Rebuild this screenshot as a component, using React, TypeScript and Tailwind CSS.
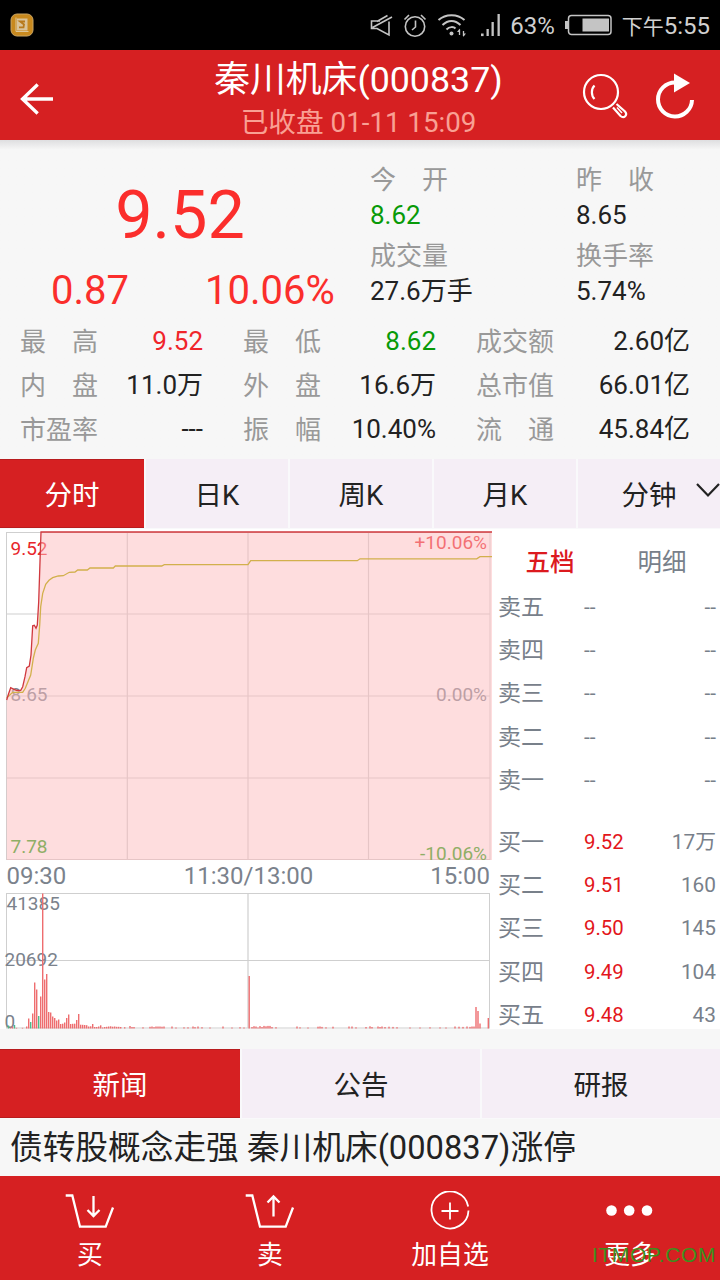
import React from 'react';
import clsx from 'clsx';

const FONT = "font-['Roboto','Noto_Sans_CJK_SC',sans-serif]";

const PERIODS = ['分时', '日K', '周K', '月K', '分钟'];
const NEWS_TABS = ['新闻', '公告', '研报'];

const STATS = [
    { label: '最　高', value: '9.52', color: 'text-[#f0252a]' },
    { label: '最　低', value: '8.62', color: 'text-[#089a08]' },
    { label: '成交额', value: '2.60亿' },
    { label: '内　盘', value: '11.0万' },
    { label: '外　盘', value: '16.6万' },
    { label: '总市值', value: '66.01亿' },
    { label: '市盈率', value: '---' },
    { label: '振　幅', value: '10.40%' },
    { label: '流　通', value: '45.84亿' },
];

const ASKS = ['卖五', '卖四', '卖三', '卖二', '卖一'];
const BIDS = [
    ['买一', '9.52', '17万'],
    ['买二', '9.51', '160'],
    ['买三', '9.50', '145'],
    ['买四', '9.49', '104'],
    ['买五', '9.48', '43'],
];

const PRICE_LINE =
    '6.7,171 8.5,165 10.7,158.7 14,160.3 17,161.5 20.7,161.3 22.7,157.7 25,147.7 26.7,138.7 29.3,137 31,126 32.7,96.7 34.3,96.3 36,99.3 37.3,96 38.7,72.7 40,32.7 41,3 492,3';

const AVG_LINE =
    '6.7,168.7 12.7,163.3 22.7,163.3 25.3,159.3 30.7,146 33.3,129.3 35.3,121 38.3,114.3 39.7,96 40.7,77.7 42.7,64.3 45.7,55.3 49,51.3 52.7,48.7 58.3,47 63.3,46.7 69.3,43.3 75,43 77.7,41 87.3,41 90,39 113.3,39 115.3,37 161.7,37 164.3,35.7 248,35.7 250.7,31.7 357.3,31.7 360,29.8 476.7,29.8 480,27.7 492,27.7';

// [x, height, falling]
const VOLUMES: [number, number, boolean?][] = [
    [8.5, 3, true], [10.5, 1], [12.5, 2], [14.5, 3.5, true], [16.5, 0.7], [22.5, 0.7], [26.7, 2],
    [28.7, 10], [30.7, 6.5, true], [32.7, 15], [34.7, 46], [36.7, 39], [38.7, 12.5, true],
    [40.7, 32], [42.7, 135], [44.7, 49], [46.7, 54.5], [48.7, 16.5], [50.7, 16], [52.7, 12],
    [54.7, 10.5], [56.7, 8], [58.7, 9], [60.7, 4.5], [62.7, 4.8], [64.7, 6], [66.7, 10.5],
    [68.7, 14], [70.7, 4.5], [72.7, 4.7], [74.7, 4.8], [76.7, 8.5], [78.7, 14.5], [80.7, 3.8],
    [82.7, 3.7], [84.7, 3.5], [86.7, 3.3], [88.7, 2], [90.7, 2.2], [92.7, 4.5], [94.7, 1.5],
    [96.7, 1.5], [98.7, 2], [100.7, 3.2], [102.7, 1], [104.7, 1.5], [106.7, 1.7], [108.7, 2],
    [110.7, 2.2], [112.7, 1.8], [114.7, 2], [116.7, 1.7], [118.7, 1.7], [120.7, 1.5],
    [124.7, 1.3], [130, 2.5], [132, 1.5], [134, 1.5], [143, 1.2], [150, 1.7], [152, 2],
    [154, 1.4], [156, 2], [158, 2], [160, 2], [162, 1.8], [164, 2], [172, 2], [176, 1],
    [184, 1.2], [188, 1.2], [193, 2], [195, 1.4], [198, 2], [202, 1.3], [210, 1],
    [223, 2], [232, 1], [240, 1.3], [244, 1], [249.2, 52.5], [252, 1.5], [254, 2.3], [256, 2],
    [258, 1], [260, 2.4], [262, 1.5], [264, 2.6], [266, 2.2], [268, 2.6], [270, 2.6], [272, 1.5],
    [276, 1.3], [297, 2], [300, 1.2], [308, 1], [318, 1.8], [320, 2], [322, 1.6], [326, 1.2],
    [333, 1.8], [349, 2], [352, 2], [356, 1.2], [366, 1.5], [370, 2.2], [372, 1.5], [378, 2],
    [380, 1.5], [382, 2], [385, 1.5], [389, 1.8], [393, 1.6], [397, 1.3], [410, 1], [420, 1],
    [430, 1.2], [440, 1.1], [446, 1], [455, 2], [459, 1.8], [463, 1.6], [467, 2], [470, 1.6],
    [472, 2], [474, 2], [476, 21.5], [478, 17.5], [480, 5], [488.3, 10.5],
];

const StatusBar = () => (
    <div className="flex h-[50px] items-center bg-black pr-[10px] pl-[10px] text-[24px] leading-[52px] text-[#d0d0d0]">
        <svg className="h-6 w-6" viewBox="0 0 24 24">
            <rect x="1" y="1" width="22" height="22" rx="6" fill="#c8891e" stroke="#c9a565" />
            <path d="M6 4.500V18.500H18.500" fill="none" stroke="#dcc69a" strokeWidth="1" />
            <rect x="7" y="5.500" width="10.500" height="12" fill="#d9c39a" />
            <path d="M15 8.500H10L14 11.500L13.500 14.300H9" fill="none" stroke="#b87a1c" strokeWidth="1.800" />
        </svg>
        <div className="flex-1" />

        {/* mute */}
        <svg className="h-6 w-6" viewBox="0 0 24 24" fill="none" stroke="#c4c4c4" strokeWidth="1.600">
            <path d="M11 8H2.500V15.500H8L20 22V8.500M8 8.500L18.500 2.500M3.500 14.500L23 4" />
        </svg>
        {/* alarm */}
        <svg className="ml-[10px] h-6 w-6" viewBox="0 0 24 24" fill="none" stroke="#c4c4c4" strokeWidth="1.600">
            <circle cx="12" cy="13.500" r="9.700" />
            <path d="M12.500 7.500V14L9 17M1.500 6.500L6 2M18 2L22.500 6.500" />
        </svg>
        {/* wifi */}
        <svg className="ml-[10px] h-6 w-[30px]" viewBox="0 0 30 24" fill="none" stroke="#c4c4c4" strokeWidth="2">
            <path d="M1.500 7C8.500 .5 20.500 .5 27.500 7M5.500 12C11 6.500 18 6.500 23.500 12M9.500 16.500C12.500 13.500 16.500 13.500 18.500 15.500" />
            <circle cx="14.500" cy="20.500" r="2" fill="#c4c4c4" stroke="none" />
            <path d="M22.500 16.500V22M26.500 23V18" strokeWidth="1.300" />
            <path d="M20 19L22.800 15.500V19ZM29 20.500L26.200 24V20.500Z" fill="#c4c4c4" stroke="none" />
        </svg>
        {/* signal */}
        <svg className="ml-[14px] h-6 w-5" viewBox="0 0 20 24" fill="#c4c4c4">
            <rect x="0" y="20.500" width="2.600" height="2.600" />
            <rect x="5.500" y="16" width="2.300" height="7" />
            <rect x="10.500" y="9" width="2.300" height="14" />
            <rect x="16.500" y="1" width="2.300" height="22" />
        </svg>
        <span className="ml-[9px] h-[50px]">63%</span>
        <svg className="ml-[10px] h-[22px] w-[48px]" viewBox="0 0 48 22">
            <rect x="3.500" y="1.500" width="42.500" height="19" rx="3" fill="none" stroke="#c4c4c4" strokeWidth="1.500" />
            <rect x="0" y="7" width="3" height="8" fill="#c4c4c4" />
            <rect x="17.500" y="4.500" width="26.500" height="13" fill="#c4c4c4" />
        </svg>
        <span className="ml-[9px] h-[50px] whitespace-nowrap">
            <span className="text-[21px]">下午</span>5:55
        </span>
    </div>
);

const Header = () => (
    <header className="flex h-[90px] items-center justify-between bg-[#d62022] pr-[24px] pl-[19px]">
        <svg className="mt-[8px] h-9 w-[110px]" viewBox="0 0 110 36" fill="none" stroke="#fff" strokeWidth="3.300">
            <path d="M34 18H3M18.700 3.500L3.500 18L18.700 32.500" />
        </svg>
        <div className="-mr-[6px] flex flex-col items-center pt-[12px] whitespace-nowrap">
            <h1 className="h-[44px] text-[35.800px] leading-[44px] text-white">秦川机床(000837)</h1>
            <p className="h-[42px] text-[27.700px] leading-[42px] text-[#f9a094]">已收盘 01-11 15:09</p>
        </div>
        <div className="flex items-center gap-[26px]">
            <svg className="mt-[4px] h-[48px] w-[46px]" viewBox="0 0 46 48" fill="none" stroke="#fff" strokeWidth="2.200">
                <circle cx="19" cy="19" r="17" />
                <path d="M12.500 12.500C9 16 9 22.500 12.500 26" />
                <path d="M31 34.500L38.500 43C42 46 46 42 43 38.500L34.500 31" />
                <path d="M35 34.500L40 40" strokeWidth="1.500" />
            </svg>
            <svg className="mt-[3px] h-[48px] w-[42px]" viewBox="0 0 42 48" fill="none">
                <path d="M21 9.500A17 17 0 1 0 38 27" stroke="#fff" strokeWidth="4" />
                <path d="M20 0.500L36 10L20 19.500Z" fill="#fff" />
            </svg>
        </div>
    </header>
);

const Quote = () => (
    <section className="h-[319px] bg-[#f7f7f7] bg-linear-to-b from-[#dedee0] to-[#f7f7f7] to-[10px] text-[26px] leading-[36px] text-[#222]">
        <div className="flex h-[179px]">
            <div className="w-[360px] pt-[35px] text-center text-[#fb2e2c]">
                <div className="h-[80px] text-[66.500px] leading-[80px]">9.52</div>
                <div className="mt-[12px] grid h-[48px] grid-cols-2 text-[40px] leading-[48px]">
                    <span>0.87</span>
                    <span>10.06%</span>
                </div>
            </div>
            <div className="w-[206px] pt-[21px] pl-[10px]">
                <p className="h-9 leading-[38px] text-[#999]">今　开</p>
                <p className="text-[#089a08]">8.62</p>
                <p className="mt-1 h-9 leading-[38px] text-[#999]">成交量</p>
                <p>27.6万手</p>
            </div>
            <div className="pt-[21px] pl-[10px]">
                <p className="h-9 leading-[38px] text-[#999]">昨　收</p>
                <p>8.65</p>
                <p className="mt-1 h-9 leading-[38px] text-[#999]">换手率</p>
                <p>5.74%</p>
            </div>
        </div>
        <div className="grid grid-cols-[183px_193px_214px] justify-between pr-[30px] pl-[20px] leading-[44px]">
            {STATS.map(({ label, value, color }) => (
                <div key={label} className="flex h-[44px] justify-between whitespace-nowrap">
                    <span className="leading-[46px] text-[#999]">{label}</span>
                    <span className={color}>{value}</span>
                </div>
            ))}
        </div>
    </section>
);

const TabBar = ({ tabs, chevron }: { tabs: string[]; chevron?: boolean }) => (
    <nav className="relative grid h-[70px] auto-cols-fr grid-flow-col bg-[#f9f9fb] text-[27.500px]">
        {tabs.map((tab, idx) => (
            <div
                key={tab}
                className={clsx(
                    'h-[69px] text-center',
                    idx === 0
                        ? 'border-y border-[#b81c1e] bg-[#d62022] leading-[71px] text-white'
                        : 'border-l-2 border-[#f9f9fb] bg-[#f5eef6] leading-[73px] text-[#222]'
                )}
            >
                {tab}
            </div>
        ))}
        {chevron && (
            <svg className="absolute top-[23px] right-0 h-4 w-6" viewBox="0 0 24 16" fill="none" stroke="#222" strokeWidth="2.200">
                <path d="M1 2L12 13.500L23 2" />
            </svg>
        )}
    </nav>
);

const Chart = () => (
    <svg className={`h-[500px] w-[492px] ${FONT}`} viewBox="0 0 492 500">
        {/* price grid */}
        <g fill="none" stroke="#cfcfcf">
            <rect x="6.500" y="3.500" width="483.500" height="327" />
            <path d="M7 85H490M7 167H490M7 249H490M127.300 4V330M248 4V330M368.500 4V330" strokeWidth="1.200" />
        </g>
        <g fontSize="19" fill="#7b828c">
            <text x="10.500" y="26" fill="#e8262b">9.52</text>
            <text x="487" y="19.500" fill="#e8262b" textAnchor="end">+10.06%</text>
            <text x="10.500" y="172">8.65</text>
            <text x="487" y="172" textAnchor="end">0.00%</text>
        </g>
        <polygon points={`${PRICE_LINE} 492,331 6.700,331`} fill="#fdbbbd" fillOpacity="0.500" />
        <g fontSize="19" fill="#8fae66">
            <text x="10.500" y="324">7.78</text>
            <text x="487" y="331" textAnchor="end">-10.06%</text>
        </g>
        <polyline points={AVG_LINE} fill="none" stroke="#d2b04c" strokeWidth="1.300" />
        <polyline points={PRICE_LINE} fill="none" stroke="#d0383e" strokeWidth="1.300" />

        <g fontSize="24" fill="#7b828c">
            <text x="6.500" y="355">09:30</text>
            <text x="248.500" y="355" textAnchor="middle">11:30/13:00</text>
            <text x="490" y="355" textAnchor="end">15:00</text>
        </g>

        {/* volume */}
        <g fill="none" stroke="#cfcfcf">
            <rect x="6.500" y="364.500" width="483" height="134.500" />
            <path d="M7 431.500H490M248 365V499" strokeWidth="1.200" />
        </g>
        <g fontSize="19" fill="#7b828c">
            <text x="6.500" y="381">41385</text>
            <text x="4.500" y="437">20692</text>
            <text x="4.500" y="499">0</text>
        </g>
        {VOLUMES.map(([x, h, falling]) => (
            <rect key={x} x={x - 0.7} y={499.5 - h} width="1.400" height={h} fill={falling ? '#4fb98a' : '#ee6d6f'} />
        ))}
    </svg>
);

const OrderBook = () => (
    <div className="flex-1 overflow-hidden text-[20.800px] text-[#78808a]">
        <div className="flex h-[56px] px-[2px] pt-[10px] text-center text-[24.500px] leading-[48px]">
            <span className="flex-1 font-medium text-[#dc1a1e]">五档</span>
            <span className="flex-1">明细</span>
        </div>
        {ASKS.map((name) => (
            <div key={name} className="flex h-[43.200px] pr-[4px] pl-[6px] leading-[45px]">
                <span className="w-[86px] text-[23px]">{name}</span>
                <span className="flex-1">--</span>
                <span>--</span>
            </div>
        ))}
        <div className="h-[19px]" />
        {BIDS.map(([name, price, amount]) => (
            <div key={name} className="flex h-[43.200px] pr-[4px] pl-[6px] leading-[45px]">
                <span className="w-[86px] text-[23px]">{name}</span>
                <span className="flex-1 text-[20.400px] text-[#e3161b]">{price}</span>
                <span>{amount}</span>
            </div>
        ))}
    </div>
);

const CartIcon = ({ up }: { up?: boolean }) => (
    <svg className="h-10 w-[52px]" viewBox="0 0 52 40" fill="none" stroke="#fff" strokeWidth="2.300">
        <path d="M1.700 4.500H8.300L16 35.700H41.700L49 16.500" />
        {up ? (
            <path d="M29.500 25.500V6M23.500 11.500L29.500 5.500L35.500 11.500" />
        ) : (
            <path d="M29.500 5V25M23.500 19L29.500 25L35.500 19" />
        )}
    </svg>
);

const BottomBar = () => {
    const items = [
        { label: '买', icon: <CartIcon /> },
        { label: '卖', icon: <CartIcon up /> },
        {
            label: '加自选',
            icon: (
                <svg className="h-10 w-10" viewBox="0 0 40 40" fill="none" stroke="#fff" strokeWidth="1.800">
                    <path d="M38.200 15.500A18.500 18.500 0 1 0 38.500 19.500M20 11.500V28.500M11.500 20H28.500" />
                </svg>
            ),
        },
        {
            label: '更多',
            icon: (
                <svg className="h-10 w-[48px]" viewBox="0 0 48 40" fill="#fff">
                    <circle cx="5.500" cy="19.500" r="5.300" />
                    <circle cx="23.200" cy="19.500" r="5.300" />
                    <circle cx="41" cy="19.500" r="5.300" />
                </svg>
            ),
        },
    ];

    return (
        <footer className="relative grid h-[104px] grid-cols-4 bg-[#d62022] pt-[15px] text-white">
            {items.map(({ label, icon }) => (
                <div key={label} className="flex flex-col items-center">
                    {icon}
                    <span className="mt-[6px] h-9 text-[25.800px] leading-9">{label}</span>
                </div>
            ))}
            <span className="absolute right-[4px] bottom-[11px] font-['Liberation_Sans',sans-serif] text-[21px] leading-7 tracking-[0.600px] text-[#3c8f1e]">
                ITMOP.COM
            </span>
        </footer>
    );
};

const App = () => {
    return (
        <div className={`h-[1280px] w-[720px] overflow-hidden bg-[#f7f7f7] ${FONT}`}>
            <StatusBar />
            <Header />
            <Quote />
            <TabBar tabs={PERIODS} chevron />
            <div className="flex h-[500px] bg-white">
                <Chart />
                <OrderBook />
            </div>
            <div className="h-[20px]" />
            <TabBar tabs={NEWS_TABS} />
            <p className="h-[57px] pl-[10px] text-[32.700px] leading-[59px] whitespace-nowrap text-[#222]">
                债转股概念走强 秦川机床(000837)涨停
            </p>
            <BottomBar />
        </div>
    );
};

export default App;
